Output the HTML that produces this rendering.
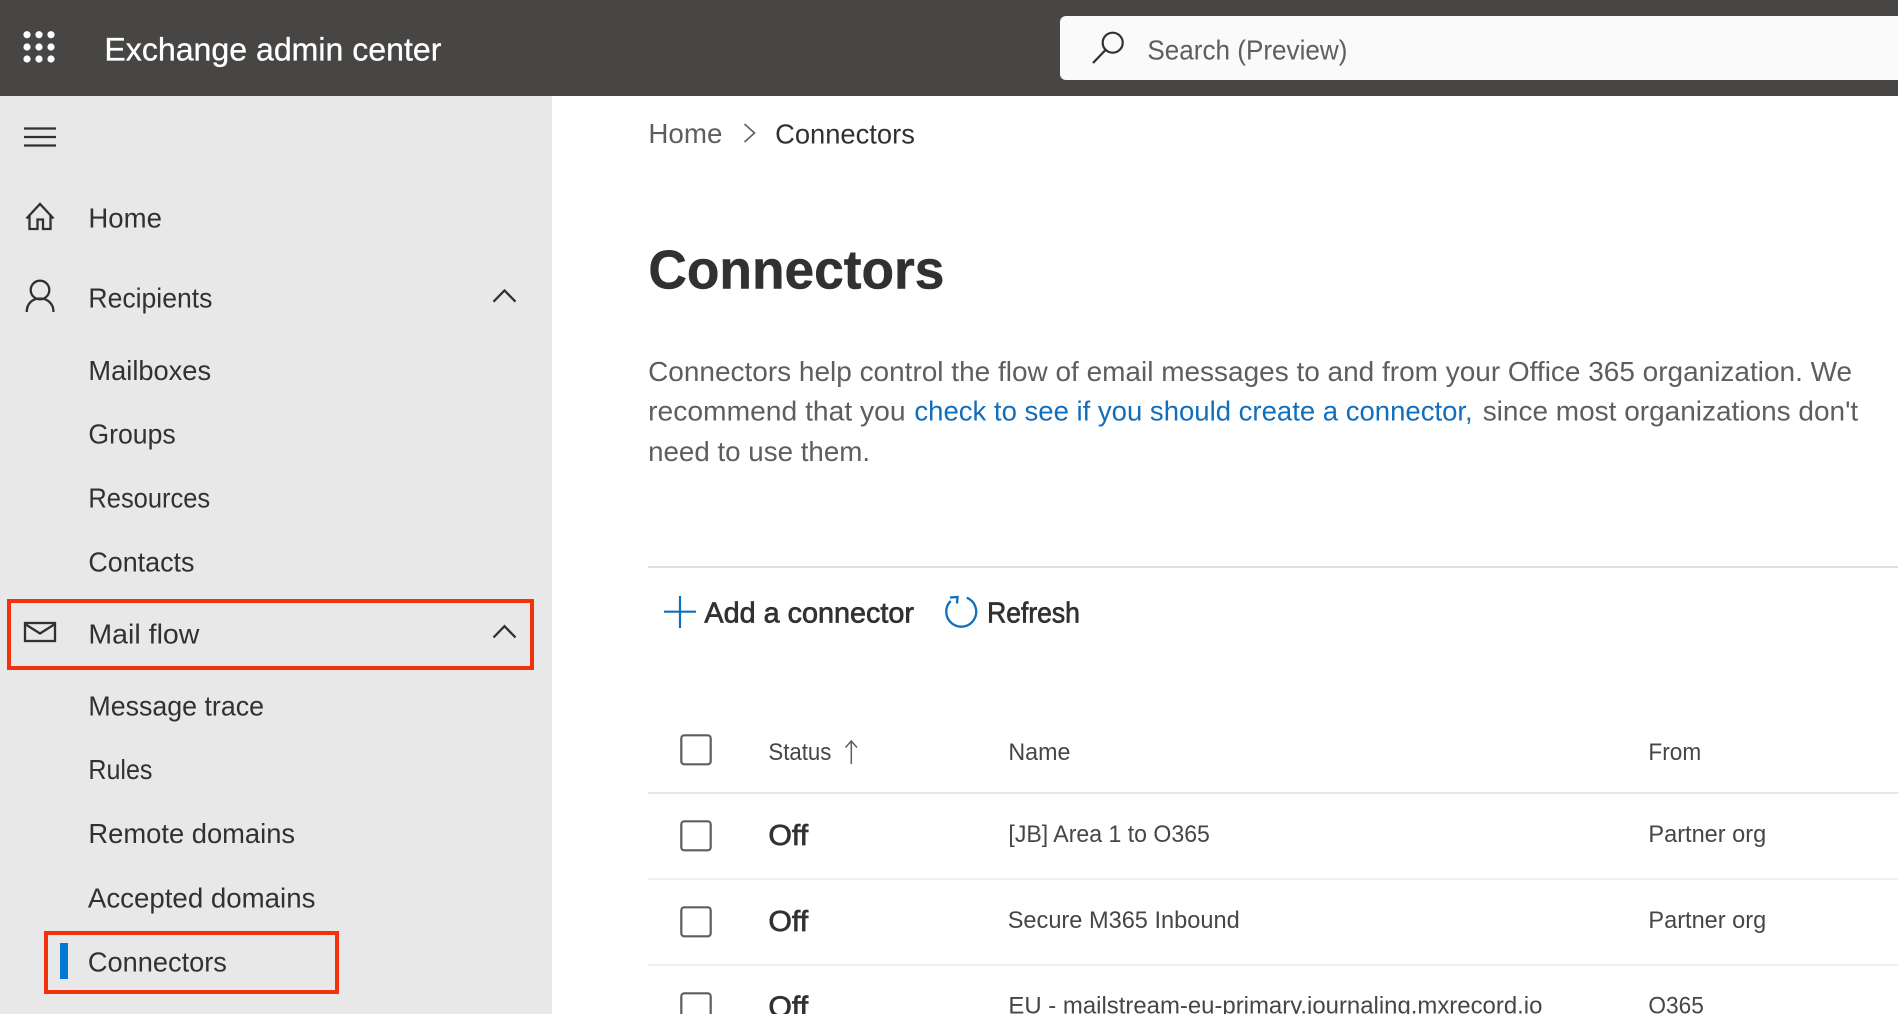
<!DOCTYPE html>
<html lang="en">
<head>
<meta charset="utf-8">
<title>Exchange admin center - Connectors</title>
<style>
html,body{margin:0;padding:0;width:1898px;height:1014px;overflow:hidden;background:#fff}
svg{display:block}
text{font-family:"Liberation Sans",sans-serif;transform:translateX(-.6px)}
.nav{font-size:28px;fill:#323130}
.p{font-size:27.5px;fill:#605e5c}
.cell{font-size:24.5px;fill:#484644}
.semi{font-size:28.5px;fill:#323130;stroke:#323130;stroke-width:.7px}
.ic{fill:none;stroke:#323130;stroke-width:2.3}
.cb{fill:#fff;stroke:#605e5c;stroke-width:2.2}
</style>
</head>
<body>
<svg width="1898" height="1014" viewBox="0 0 1898 1014" xmlns="http://www.w3.org/2000/svg">
<rect width="1898" height="1014" fill="#fff"/>
<rect width="1898" height="96" fill="#484644"/>
<rect x="0" y="96" width="552" height="918" fill="#e8e8e8"/>

<g fill="#fff">
<circle cx="27" cy="34.7" r="3.6"/><circle cx="39" cy="34.7" r="3.6"/><circle cx="51" cy="34.7" r="3.6"/>
<circle cx="27" cy="47" r="3.6"/><circle cx="39" cy="47" r="3.6"/><circle cx="51" cy="47" r="3.6"/>
<circle cx="27" cy="59" r="3.6"/><circle cx="39" cy="59" r="3.6"/><circle cx="51" cy="59" r="3.6"/>
</g>
<text x="105" y="60.5" font-size="32" fill="#fff" stroke="#fff" stroke-width=".3" textLength="337" lengthAdjust="spacingAndGlyphs">Exchange admin center</text>

<rect x="1060" y="16" width="860" height="64" rx="6" fill="#fafafa"/>
<circle cx="1112.7" cy="42.7" r="10" fill="none" stroke="#323130" stroke-width="2.2"/>
<path d="M1105.5 50 L1093 63" class="ic"/>
<text x="1148" y="59.3" font-size="28" fill="#605e5c" textLength="200" lengthAdjust="spacingAndGlyphs">Search (Preview)</text>

<path d="M24 128.5H56M24 137H56M24 145.5H56" class="ic"/>

<path d="M26.5 218.5 L40 204 L53.5 218.5" class="ic"/>
<path d="M29.5 214.5V229H37.5V219.5H43V229H50.5V214.5" class="ic"/>
<text class="nav" x="89" y="227.5" textLength="73.5" lengthAdjust="spacingAndGlyphs">Home</text>

<circle cx="40" cy="290" r="9.3" class="ic"/>
<path d="M26.7 312 C26.7 303 33 298.5 40 298.5 C47 298.5 53.5 303 53.5 312" class="ic"/>
<text class="nav" x="89" y="307.5" textLength="124" lengthAdjust="spacingAndGlyphs">Recipients</text>
<path d="M493.5 301.7 L504.5 290.5 L515.5 301.7" class="ic"/>

<text class="nav" x="89" y="380" textLength="122.7" lengthAdjust="spacingAndGlyphs">Mailboxes</text>
<text class="nav" x="89" y="443.7" textLength="87.3" lengthAdjust="spacingAndGlyphs">Groups</text>
<text class="nav" x="89" y="507.7" textLength="121.7" lengthAdjust="spacingAndGlyphs">Resources</text>
<text class="nav" x="89" y="571.7" textLength="106" lengthAdjust="spacingAndGlyphs">Contacts</text>

<rect x="9" y="601" width="523" height="67" fill="none" stroke="#f1320c" stroke-width="4"/>
<rect x="25" y="623" width="30" height="18" class="ic"/>
<path d="M25 624 L40 633.5 L55 624" class="ic"/>
<text class="nav" x="89" y="643.3" textLength="111" lengthAdjust="spacingAndGlyphs">Mail flow</text>
<path d="M493.5 637.5 L504.5 626.2 L515.5 637.5" class="ic"/>

<text class="nav" x="89" y="715.7" textLength="175.6" lengthAdjust="spacingAndGlyphs">Message trace</text>
<text class="nav" x="89" y="779" textLength="64" lengthAdjust="spacingAndGlyphs">Rules</text>
<text class="nav" x="89" y="843" textLength="206.7" lengthAdjust="spacingAndGlyphs">Remote domains</text>
<text class="nav" x="88.5" y="907.5" textLength="227.5" lengthAdjust="spacingAndGlyphs">Accepted domains</text>
<text class="nav" x="88.5" y="971.5" textLength="139" lengthAdjust="spacingAndGlyphs">Connectors</text>

<rect x="46" y="933" width="291" height="59" fill="none" stroke="#f1320c" stroke-width="4"/>
<rect x="60" y="943" width="8" height="36" fill="#0078d4"/>

<text x="649" y="143" font-size="27.5" fill="#605e5c" textLength="74" lengthAdjust="spacingAndGlyphs">Home</text>
<path d="M744.5 124 L754.5 133 L744.5 142" fill="none" stroke="#605e5c" stroke-width="1.6"/>
<text x="775.7" y="143.7" font-size="27.5" fill="#323130" textLength="139.8" lengthAdjust="spacingAndGlyphs">Connectors</text>

<text x="649" y="288.7" font-size="55" font-weight="700" fill="#323130" stroke="#323130" stroke-width=".5" textLength="296" lengthAdjust="spacingAndGlyphs">Connectors</text>

<text class="p" x="648.7" y="381" textLength="1204" lengthAdjust="spacingAndGlyphs">Connectors help control the flow of email messages to and from your Office 365 organization. We</text>
<text class="p" x="648.7" y="420.7" textLength="257.5" lengthAdjust="spacingAndGlyphs">recommend that you</text>
<text class="p" x="915" y="420.7" style="fill:#106ebe" textLength="558.3" lengthAdjust="spacingAndGlyphs">check to see if you should create a connector,</text>
<text class="p" x="1483.3" y="420.7" textLength="375.5" lengthAdjust="spacingAndGlyphs">since most organizations don't</text>
<text class="p" x="648.7" y="461" textLength="222" lengthAdjust="spacingAndGlyphs">need to use them.</text>

<rect x="648" y="566" width="1250" height="2" fill="#e1dfdd"/>

<path d="M664 611.7H696M680 596V628" fill="none" stroke="#106ebe" stroke-width="2.2"/>
<text class="semi" x="705" y="622.7" textLength="209.5" lengthAdjust="spacingAndGlyphs">Add a connector</text>
<path d="M966.7 597.7 A15 15 0 1 1 950.7 601" fill="none" stroke="#106ebe" stroke-width="2.3"/>
<path d="M950 597.5 L957.5 597 L957 603.5" fill="none" stroke="#106ebe" stroke-width="2.3"/>
<text class="semi" x="987.7" y="622.7" textLength="92.8" lengthAdjust="spacingAndGlyphs">Refresh</text>

<rect x="681.3" y="735.3" width="29.4" height="29" rx="3" class="cb"/>
<text class="cell" x="769" y="760" textLength="63" lengthAdjust="spacingAndGlyphs">Status</text>
<path d="M851.3 741V764M845.5 747.5 L851.3 741 L857 747.5" fill="none" stroke="#605e5c" stroke-width="1.5"/>
<text class="cell" x="1009" y="760" textLength="62" lengthAdjust="spacingAndGlyphs">Name</text>
<text class="cell" x="1649" y="760" textLength="52.8" lengthAdjust="spacingAndGlyphs">From</text>
<rect x="648" y="792" width="1250" height="2" fill="#e8e6e4"/>

<rect x="681.3" y="821.3" width="29.4" height="29" rx="3" class="cb"/>
<text class="semi" x="769" y="845" textLength="39.8" lengthAdjust="spacingAndGlyphs">Off</text>
<text class="cell" x="1009" y="842" textLength="201.5" lengthAdjust="spacingAndGlyphs">[JB] Area 1 to O365</text>
<text class="cell" x="1649" y="842" textLength="117.8" lengthAdjust="spacingAndGlyphs">Partner org</text>
<rect x="648" y="878" width="1250" height="2" fill="#f1f0ef"/>

<rect x="681.3" y="907.3" width="29.4" height="29" rx="3" class="cb"/>
<text class="semi" x="769" y="931" textLength="39.8" lengthAdjust="spacingAndGlyphs">Off</text>
<text class="cell" x="1008.3" y="928" textLength="232" lengthAdjust="spacingAndGlyphs">Secure M365 Inbound</text>
<text class="cell" x="1649" y="928" textLength="117.8" lengthAdjust="spacingAndGlyphs">Partner org</text>
<rect x="648" y="964" width="1250" height="2" fill="#f1f0ef"/>

<rect x="681.3" y="993.3" width="29.4" height="29" rx="3" class="cb"/>
<text class="semi" x="769" y="1016.7" textLength="39.8" lengthAdjust="spacingAndGlyphs">Off</text>
<text class="cell" x="1009" y="1013.3" textLength="534" lengthAdjust="spacingAndGlyphs">EU - mailstream-eu-primary.journaling.mxrecord.io</text>
<text class="cell" x="1649" y="1013.3" textLength="55.5" lengthAdjust="spacingAndGlyphs">O365</text>
</svg>
</body>
</html>
